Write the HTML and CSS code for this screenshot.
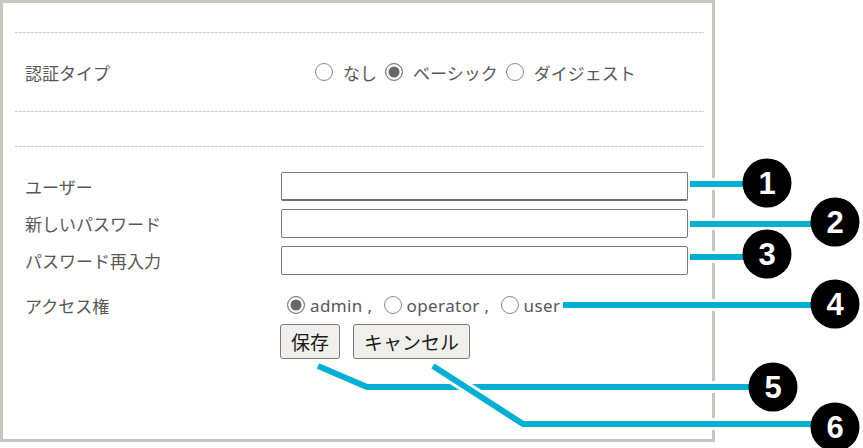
FILE: index.html
```html
<!DOCTYPE html>
<html lang="ja">
<head>
<meta charset="utf-8">
<title>認証設定</title>
<link rel="stylesheet" href="styles.css">
</head>
<body>
<div class="panel">
  <div class="sep"></div>
  <div class="auth">
    <div class="auth-label">認証タイプ</div>
    <div class="opts">
      <label class="opt"><input type="radio" name="auth"><span>なし</span></label>
      <label class="opt"><input type="radio" name="auth" checked><span>ベーシック</span></label>
      <label class="opt"><input type="radio" name="auth"><span>ダイジェスト</span></label>
    </div>
  </div>
  <div class="sep"></div>
  <div class="spacer"></div>
  <div class="sep"></div>
  <div class="form">
    <div class="frow"><label class="flabel">ユーザー</label><input type="text" class="text first"></div>
    <div class="frow"><label class="flabel">新しいパスワード</label><input type="password" class="text"></div>
    <div class="frow"><label class="flabel">パスワード再入力</label><input type="password" class="text"></div>
    <div class="frow access">
      <label class="flabel">アクセス権</label>
      <div class="aopts">
        <label class="aopt"><input type="radio" name="acc" checked><span>admin ,</span></label>
        <label class="aopt"><input type="radio" name="acc"><span>operator ,</span></label>
        <label class="aopt"><input type="radio" name="acc"><span>user</span></label>
      </div>
    </div>
    <div class="buttons">
      <button class="btn">保存</button>
      <button class="btn">キャンセル</button>
    </div>
  </div>
</div>
<svg class="notes" width="863" height="448" viewBox="0 0 863 448">
  <g fill="none" stroke-linecap="butt" stroke-linejoin="miter">
    <path d="M690 184 H750" stroke="#fff" stroke-width="12"/>
    <path d="M690 184 H750" stroke="#00afd2" stroke-width="6"/>
    <path d="M690 224 H815" stroke="#fff" stroke-width="12"/>
    <path d="M690 224 H815" stroke="#00afd2" stroke-width="6"/>
    <path d="M690 257 H750" stroke="#fff" stroke-width="12"/>
    <path d="M690 257 H750" stroke="#00afd2" stroke-width="6"/>
    <path d="M563 305 H815" stroke="#fff" stroke-width="12"/>
    <path d="M563 305 H815" stroke="#00afd2" stroke-width="6"/>
    <path d="M318 366 L367 387 H755" stroke="#fff" stroke-width="12"/>
    <path d="M318 366 L367 387 H755" stroke="#00afd2" stroke-width="6"/>
    <path d="M433 366 L523 424 H815" stroke="#fff" stroke-width="12"/>
    <path d="M433 366 L523 424 H815" stroke="#00afd2" stroke-width="6"/>
  </g>
  <g class="badge">
    <circle cx="767" cy="183" r="24.5"/><text x="767" y="194">1</text>
    <circle cx="835" cy="222" r="24.5"/><text x="835" y="233">2</text>
    <circle cx="767" cy="254" r="24.5"/><text x="767" y="265">3</text>
    <circle cx="835" cy="304" r="24.5"/><text x="835" y="315">4</text>
    <circle cx="773" cy="387" r="24.5"/><text x="773" y="398">5</text>
    <circle cx="835" cy="427" r="24.5"/><text x="835" y="438">6</text>
  </g>
</svg>
</body>
</html>
```

FILE: styles.css
```css
html, body {
  margin: 0;
  padding: 0;
  background: #fff;
}
body {
  position: relative;
  width: 863px;
  height: 448px;
  overflow: hidden;
  font-family: "Noto Sans", "Noto Sans CJK JP", sans-serif;
  font-size: 17px;
  color: #575757;
}
.panel {
  box-sizing: border-box;
  width: 715px;
  height: 442px;
  border: 3px solid #c9c6c1;
  padding: 29px 8px 0 12px;
}
.sep {
  height: 1px;
  background: repeating-linear-gradient(to right, #c6c6c6 0 3px, transparent 3px 4px);
}
.auth {
  height: 78px;
  display: flex;
  align-items: center;
}
.auth-label {
  width: 290px;
  padding-left: 10px;
}
.opts {
  display: flex;
  align-items: center;
}
.opt {
  display: flex;
  align-items: center;
  gap: 10px;
  margin-right: 8px;
}
input[type="radio"] {
  appearance: none;
  -webkit-appearance: none;
  box-sizing: border-box;
  width: 18px;
  height: 18px;
  margin: 0;
  border: 1.5px solid #8a8a8a;
  border-radius: 50%;
  background: #fff;
  flex: none;
}
input[type="radio"]:checked {
  background: #6a666d;
  box-shadow: inset 0 0 0 2.5px #fff;
  border-color: #7d7d7d;
}
.spacer {
  height: 34px;
}
.form {
  padding-top: 25px;
  display: flex;
  flex-direction: column;
}
.frow {
  display: flex;
  align-items: center;
  margin-bottom: 8px;
}
.flabel {
  width: 256px;
  padding-left: 10px;
  flex: none;
}
.text {
  box-sizing: border-box;
  width: 407px;
  height: 29px;
  margin: 0;
  border: 1px solid #7b7b7b;
  border-radius: 2px;
  background: #fff;
  padding: 0 4px;
  outline: none;
}
.text.first {
  border-bottom: 2px solid #6e6e6e;
}
.frow.access {
  height: 24px;
  margin-top: 10px;
  margin-bottom: 0;
}
.aopts {
  display: flex;
  align-items: center;
  margin-left: 6px;
}
.aopt {
  display: flex;
  align-items: center;
  gap: 5px;
  margin-right: 11px;
}
.aopt span {
  letter-spacing: 0.4px;
}
.buttons {
  display: flex;
  gap: 13px;
  margin-top: 7px;
  margin-left: 265px;
}
.btn {
  box-sizing: border-box;
  height: 35px;
  padding: 0 10px;
  margin: 0;
  font-family: "Noto Sans CJK JP", sans-serif;
  font-size: 19px;
  color: #1a1a1a;
  background: #f0efec;
  border: 1px solid #7b7b7b;
  border-radius: 3px;
}
.notes {
  position: absolute;
  left: 0;
  top: 0;
  pointer-events: none;
}
.badge circle {
  fill: #000;
}
.badge text {
  fill: #fff;
  font-family: "Liberation Sans", Arial, sans-serif;
  font-weight: bold;
  font-size: 31px;
  text-anchor: middle;
}
```
